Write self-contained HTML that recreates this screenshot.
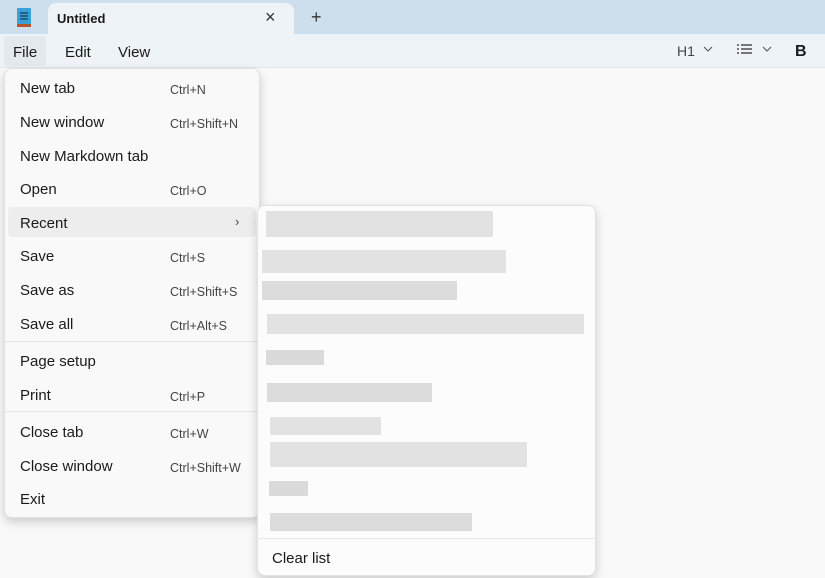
<!DOCTYPE html><html><head><style>
*{margin:0;padding:0;box-sizing:border-box}
body{width:825px;height:578px;overflow:hidden;background:#f9f9f9;font-family:"Liberation Sans",sans-serif;position:relative;color:#1a1a1a}
.a{position:absolute}
.top{left:0;top:0;width:825px;height:34px;background:#cddeed}
.tab{left:48px;top:3px;width:246px;height:32px;background:#eef3f8;border-radius:8px 8px 0 0}
.mb{left:0;top:34px;width:825px;height:34px;background:#eef3f8;border-bottom:1px solid #e3e6ea}
.menu{left:4px;top:68px;width:256px;height:450px;background:#f9f9f9;border-radius:8px;box-shadow:0 4px 10px rgba(0,0,0,.18);border:1px solid #e2e2e2}
.it{position:absolute;left:15px;font-size:15px}
.sc{position:absolute;left:165px;font-size:12.5px;color:#444}
.sub{left:257px;top:205px;width:339px;height:371px;background:#fcfcfc;border-radius:8px;box-shadow:0 4px 10px rgba(0,0,0,.18);border:1px solid #e2e2e2}
.b{position:absolute;background:#e2e2e2}
</style></head><body>
<div class="a top"></div>
<div class="a tab"></div>
<svg class="a" style="left:16px;top:7px" width="16" height="21"><rect x="1" y="1" width="14" height="17" rx="1" fill="#3aa0d8"/><rect x="1" y="17" width="14" height="3" fill="#b5532a"/><g stroke="#123" stroke-width="1"><line x1="4" y1="6" x2="12" y2="6"/><line x1="4" y1="9" x2="12" y2="9"/><line x1="4" y1="12" x2="12" y2="12"/></g></svg>
<div class="a" style="left:57px;top:11px;font-size:13px;font-weight:bold">Untitled</div>
<div class="a" style="left:265px;top:7px;font-size:18px;color:#333">×</div>
<div class="a" style="left:311px;top:7px;font-size:18px;color:#333">+</div>
<div class="a mb"></div>
<div class="a" style="left:4px;top:36px;width:42px;height:30px;background:#e4e9ee;border-radius:4px"></div>
<div class="a" style="left:13px;top:44px;font-size:15px">File</div>
<div class="a" style="left:65px;top:44px;font-size:15px">Edit</div>
<div class="a" style="left:118px;top:44px;font-size:15px">View</div>
<div class="a" style="left:677px;top:43px;font-size:14px;color:#444">H1</div>
<svg class="a" style="left:703px;top:46px" width="10" height="6"><path d="M1 1l4 4 4-4" fill="none" stroke="#555" stroke-width="1.1"/></svg>
<svg class="a" style="left:737px;top:44px" width="38" height="12"><g stroke="#333" stroke-width="1.3"><line x1="0" y1="1" x2="2" y2="1"/><line x1="4" y1="1" x2="15" y2="1"/><line x1="0" y1="5" x2="2" y2="5"/><line x1="4" y1="5" x2="15" y2="5"/><line x1="0" y1="9" x2="2" y2="9"/><line x1="4" y1="9" x2="15" y2="9"/></g><path d="M26 3l4 4 4-4" fill="none" stroke="#555" stroke-width="1.1"/></svg>
<div class="a" style="left:795px;top:43px;font-size:16px;font-weight:bold">B</div>
<div class="a menu">
<div class="a" style="left:3px;top:138px;width:248px;height:30px;background:#ededed;border-radius:4px"></div>
<div class="it" style="top:11px">New tab</div><div class="sc" style="top:14px">Ctrl+N</div>
<div class="it" style="top:45px">New window</div><div class="sc" style="top:48px">Ctrl+Shift+N</div>
<div class="it" style="top:79px">New Markdown tab</div>
<div class="it" style="top:112px">Open</div><div class="sc" style="top:115px">Ctrl+O</div>
<div class="it" style="top:146px">Recent</div><div class="sc" style="top:145px;left:230px;font-size:13px">›</div>
<div class="it" style="top:179px">Save</div><div class="sc" style="top:182px">Ctrl+S</div>
<div class="it" style="top:213px">Save as</div><div class="sc" style="top:216px">Ctrl+Shift+S</div>
<div class="it" style="top:247px">Save all</div><div class="sc" style="top:250px">Ctrl+Alt+S</div>
<div class="a" style="left:0;top:272px;width:254px;height:1px;background:#e5e5e5"></div>
<div class="it" style="top:284px">Page setup</div>
<div class="it" style="top:318px">Print</div><div class="sc" style="top:321px">Ctrl+P</div>
<div class="a" style="left:0;top:342px;width:254px;height:1px;background:#e5e5e5"></div>
<div class="it" style="top:355px">Close tab</div><div class="sc" style="top:358px">Ctrl+W</div>
<div class="it" style="top:389px">Close window</div><div class="sc" style="top:392px">Ctrl+Shift+W</div>
<div class="it" style="top:422px">Exit</div>
</div>
<div class="a sub">
<div class="b" style="left:8px;top:5px;width:227px;height:26px"></div>
<div class="b" style="left:4px;top:44px;width:244px;height:23px"></div>
<div class="b" style="left:4px;top:75px;width:195px;height:19px;background:#dcdcdc"></div>
<div class="b" style="left:9px;top:108px;width:317px;height:20px"></div>
<div class="b" style="left:8px;top:144px;width:58px;height:15px;background:#dadada"></div>
<div class="b" style="left:9px;top:177px;width:165px;height:19px;background:#dcdcdc"></div>
<div class="b" style="left:12px;top:211px;width:111px;height:18px"></div>
<div class="b" style="left:12px;top:236px;width:257px;height:25px"></div>
<div class="b" style="left:11px;top:275px;width:39px;height:15px;background:#dadada"></div>
<div class="b" style="left:12px;top:307px;width:202px;height:18px;background:#dcdcdc"></div>
<div class="a" style="left:0;top:332px;width:337px;height:1px;background:#e8e8e8"></div>
<div class="a" style="left:14px;top:344px;font-size:15px">Clear list</div>
</div>
</body></html>
